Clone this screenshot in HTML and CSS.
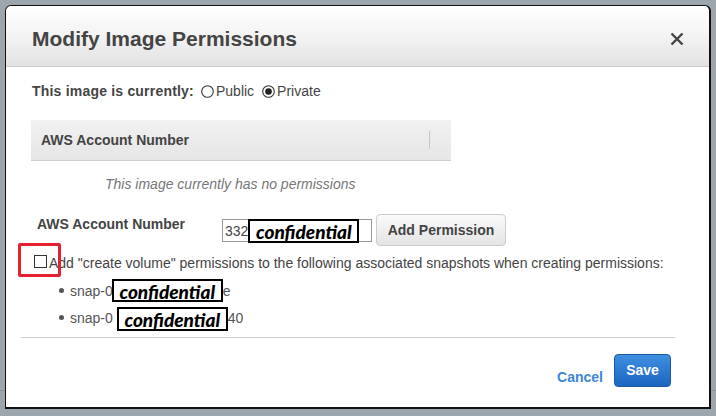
FILE: index.html
```html
<!DOCTYPE html>
<html>
<head>
<meta charset="utf-8">
<link rel="stylesheet" href="styles.css">
</head>
<body>
<div class="dialog">
  <div class="header">
    <h1 class="title">Modify Image Permissions</h1>
    <svg class="close" width="14" height="14" viewBox="0 0 14 14"><path d="M1.5 1.5 L12.5 12.5 M12.5 1.5 L1.5 12.5" stroke="#444" stroke-width="2.4" fill="none"/></svg>
  </div>
  <div class="body">
    <div class="status">
      <span class="status-label">This image is currently:</span>
      <span class="radio"><svg width="13" height="13" viewBox="0 0 13 13"><circle cx="6.5" cy="6.5" r="5.8" fill="#fff" stroke="#333" stroke-width="1.1"/></svg>Public</span>
      <span class="radio"><svg width="13" height="13" viewBox="0 0 13 13"><circle cx="6.5" cy="6.5" r="5.8" fill="#fff" stroke="#333" stroke-width="1.1"/><circle cx="6.5" cy="6.5" r="3.3" fill="#222"/></svg>Private</span>
    </div>
    <div class="table-head">
      <span class="th">AWS Account Number</span>
      <span class="th-sep"></span>
    </div>
    <div class="empty">This image currently has no permissions</div>
    <div class="add-row">
      <span class="add-label">AWS Account Number</span>
      <span class="input"><span class="input-text">332</span><span class="conf conf-input">confidential</span></span>
      <span class="btn">Add Permission</span>
    </div>
    <div class="snap-row">
      <span class="highlight"><span class="checkbox"></span></span>
      <span class="snap-text">Add "create volume" permissions to the following associated snapshots when creating permissions:</span>
    </div>
    <ul class="snaps">
      <li class="snap"><span>snap-0</span><span class="conf conf-1">confidential</span><span>e</span></li>
      <li class="snap"><span>snap-0</span><span class="conf conf-2">confidential</span><span>40</span></li>
    </ul>
    <div class="rule"></div>
  </div>
  <div class="footer">
    <span class="cancel">Cancel</span>
    <span class="save">Save</span>
  </div>
</div>
</body>
</html>
```

FILE: styles.css
```css
html, body {
  margin: 0;
  padding: 0;
}
body {
  width: 716px;
  height: 416px;
  overflow: hidden;
  padding: 5px 0 0 5px;
  box-sizing: border-box;
  background: linear-gradient(to bottom, transparent 390px, #8c949b 390px, #8c949b 391px, transparent 391px), #9da5ad;
  font-family: "Liberation Sans", Arial, sans-serif;
  color: #444;
}
.dialog {
  width: 706px;
  height: 404px;
  box-sizing: border-box;
  background: #fff;
  border-style: solid;
  border-color: #111;
  border-width: 1px 2px 2px 1px;
  border-radius: 6px 6px 0 0;
  display: flex;
  flex-direction: column;
}
.header {
  height: 61px;
  flex: none;
  box-sizing: border-box;
  border-bottom: 1px solid #ccc;
  border-radius: 6px 6px 0 0;
  background: linear-gradient(to bottom, #ffffff 0%, #f3f3f3 50%, #e2e2e2 100%);
  display: flex;
  align-items: center;
  justify-content: space-between;
  padding: 5px 25px 0 26px;
}
.title {
  margin: 0;
  font-size: 21px;
  font-weight: bold;
  color: #444;
}
.close {
  display: block;
  margin-top: 1px;
}
.body {
  display: flex;
  flex-direction: column;
}
.status {
  display: flex;
  align-items: center;
  height: 20px;
  margin-top: 14px;
  margin-left: 26px;
  font-size: 14px;
}
.status-label {
  font-weight: bold;
  letter-spacing: 0.2px;
  margin-right: 7px;
}
.radio {
  display: inline-flex;
  align-items: center;
  margin-right: 8px;
}
.radio svg {
  margin-right: 2px;
}
.table-head {
  margin: 19px 0 0 25px;
  width: 420px;
  height: 41px;
  flex: none;
  box-sizing: border-box;
  background: linear-gradient(to bottom, #f1f1f1, #e6e6e6);
  border-bottom: 1px solid #cfcfcf;
  display: flex;
  align-items: center;
  justify-content: space-between;
  padding: 0 21px 0 10px;
}
.th {
  font-size: 14px;
  font-weight: bold;
  color: #444;
}
.th-sep {
  width: 1px;
  height: 18px;
  background: #c8c8c8;
}
.empty {
  margin: 14px 0 0 99px;
  font-size: 14px;
  font-style: italic;
  color: #777;
  height: 18px;
  line-height: 18px;
}
.add-row {
  display: flex;
  align-items: center;
  margin: 21px 0 0 31px;
  height: 32px;
  flex: none;
}
.add-label {
  font-size: 14px;
  font-weight: bold;
  width: 185px;
  margin-top: -12px;
}
.input {
  display: flex;
  align-items: center;
  width: 150px;
  height: 23px;
  box-sizing: border-box;
  border: 1px solid #999;
  font-size: 14px;
  color: #444;
  padding-left: 2px;
  margin-top: 1px;
}
.conf {
  display: inline-flex;
  align-items: center;
  justify-content: center;
  box-sizing: border-box;
  border: 2px solid #000;
  background: #fff;
  color: #000;
  font-family: Lato, "Open Sans", sans-serif;
  font-weight: 900;
  font-style: italic;
  font-size: 19px;
  width: 111px;
  height: 24px;
  padding-top: 1px;
}
.conf-input {
  margin: -1px 0;
}
.btn {
  margin-left: 4px;
  width: 130px;
  height: 32px;
  box-sizing: border-box;
  border: 1px solid #ccc;
  border-radius: 4px;
  background: linear-gradient(to bottom, #fafafa, #e4e4e4);
  font-size: 14px;
  font-weight: bold;
  color: #444;
  display: flex;
  align-items: center;
  justify-content: center;
}
.snap-row {
  display: flex;
  align-items: center;
  margin: -3px 0 0 12px;
  height: 33px;
  flex: none;
}
.highlight {
  position: relative;
  z-index: 1;
  width: 43px;
  height: 34px;
  flex: none;
  box-sizing: border-box;
  border: 3px solid #e8202e;
  border-radius: 2px;
  display: flex;
  align-items: flex-end;
  justify-content: flex-end;
  padding: 0 11px 6px 0;
}
.checkbox {
  width: 13px;
  height: 13px;
  box-sizing: border-box;
  border: 1px solid #333;
  background: #fff;
}
.snap-text {
  font-size: 14px;
  color: #444;
  margin-left: -12px;
  margin-top: 7px;
  white-space: nowrap;
}
.snaps {
  list-style: none;
  margin: 1px 0 0 0;
  padding: 0 0 0 53px;
  font-size: 14px;
  color: #555;
}
.snap {
  display: flex;
  align-items: center;
  height: 27px;
}
.snap::before {
  content: "";
  width: 5px;
  height: 5px;
  border-radius: 50%;
  background: #555;
  margin-right: 6px;
}
.conf-1 {
  height: 23px;
  margin-left: -1px;
}
.conf-2 {
  height: 24px;
  margin-left: 4px;
  margin-top: 2px;
}
.rule {
  margin: 6px 0 0 15px;
  width: 654px;
  height: 1px;
  background: #cfcfcf;
}
.footer {
  display: flex;
  justify-content: flex-end;
  align-items: flex-start;
  padding: 16px 38px 0 0;
}
.cancel {
  font-size: 14px;
  font-weight: bold;
  color: #3a87d6;
  margin-top: 15px;
  margin-right: 11px;
}
.save {
  width: 57px;
  height: 33px;
  box-sizing: border-box;
  border: 1px solid #1c5aa3;
  border-radius: 4px;
  background: linear-gradient(to bottom, #3f8fe0, #1b66c1);
  color: #fff;
  font-size: 14px;
  font-weight: bold;
  display: flex;
  align-items: center;
  justify-content: center;
  padding-bottom: 2px;
}
```
